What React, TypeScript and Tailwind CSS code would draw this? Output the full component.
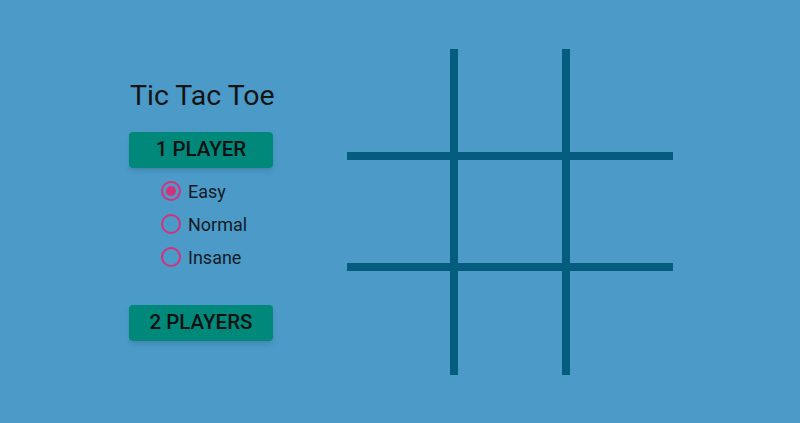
import React, { useState } from 'react';

const levels = ['Easy', 'Normal', 'Insane'];

// 3x3 board: grid tracks alternate cell / line
const Board: React.FC = () => (
    <div className="grid grid-cols-[103px_8px_104px_8px_103px] grid-rows-[103px_8px_103px_8px_104px] w-[326px] h-[326px]">
        {Array.from({ length: 25 }).map((_, i) => {
            const r = Math.floor(i / 5);
            const c = i % 5;
            const isLine = r % 2 === 1 || c % 2 === 1;
            return <div key={i} className={isLine ? 'bg-[#045c7f]' : ''} />;
        })}
    </div>
);

const App: React.FC = () => {
    const [level, setLevel] = useState('Easy');

    return (
        <div
            className="h-screen w-full bg-[#4b9ac8] flex items-center justify-center gap-[74px] pl-[2px]"
            style={{ fontFamily: 'Roboto, "Liberation Sans", sans-serif' }}
        >
            <div className="w-[144px] flex flex-col mt-[-3px]">
                <h1 className="text-[28.5px] leading-[32px] text-[#141414] pl-[1px] whitespace-nowrap">Tic Tac Toe</h1>
                <button className="mt-[20px] h-[36px] w-full rounded bg-[#00887a] text-[20.5px] font-medium text-[#111] shadow-md">
                    1 PLAYER
                </button>
                <div className="mt-[7px] pl-[32px] flex flex-col">
                    {levels.map((l) => (
                        <label key={l} className="h-[33px] flex items-center gap-[7px] cursor-pointer" onClick={() => setLevel(l)}>
                            <span className="w-[20px] h-[20px] rounded-full border-2 border-[#d5317b] flex items-center justify-center">
                                {level === l && <span className="w-[10px] h-[10px] rounded-full bg-[#d5317b]" />}
                            </span>
                            <span className="text-[18px] text-[#141a26]">{l}</span>
                        </label>
                    ))}
                </div>
                <button className="mt-[31px] h-[36px] w-full rounded bg-[#00887a] text-[20.5px] font-medium text-[#111] shadow-md">
                    2 PLAYERS
                </button>
            </div>
            <Board />
        </div>
    );
};

export default App;
